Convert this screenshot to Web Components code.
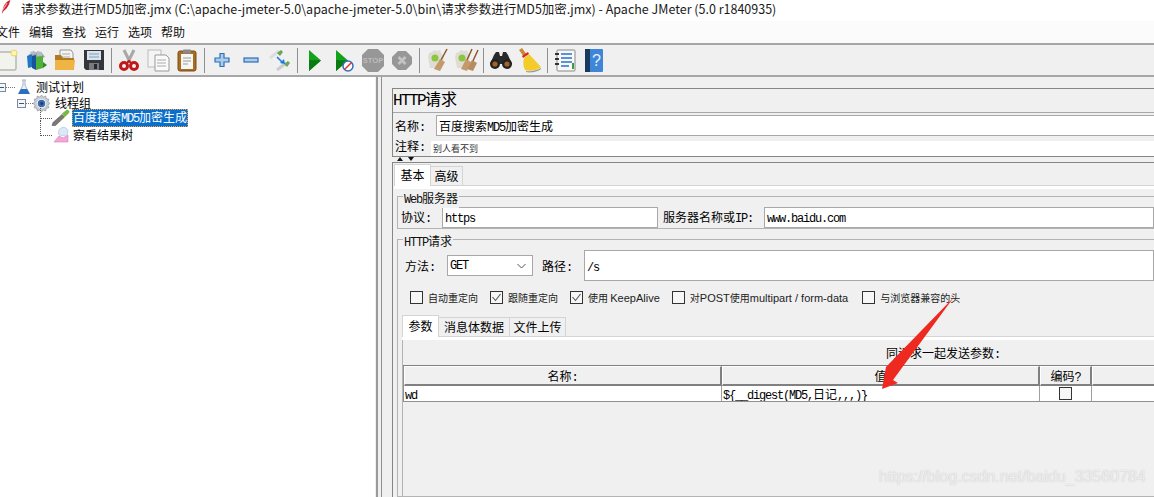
<!DOCTYPE html>
<html lang="zh-CN">
<head>
<meta charset="utf-8">
<title>Apache JMeter</title>
<style>
    html, body { margin: 0; padding: 0; background: #f0f0f0; }
    body { font: 12px "Noto Sans CJK SC", "Liberation Sans", sans-serif; color: #000; }
</style>
</head>
<body>
<jm-window></jm-window>
<script>
const ICONS = {
    newplan: `<rect x="-5" y="4" width="26" height="18" rx="1" fill="#f3f3ee" stroke="#9a9a94"/><circle cx="19" cy="5" r="3" fill="#fdf6b0" stroke="#e8d860"/><path d="M1 12h1M1 15h1" stroke="#aaa"/>`,
    templates: `<path d="M4 7l6-3 8 1 3 4-8 3z" fill="#9aa4aa"/><path d="M3 8l5-2v13l-4 1z" fill="#1f77c7"/><path d="M8 8l4-1v15l-4-2z" fill="#1553a0"/><path d="M12 9l7-1v12l-7 2z" fill="#4fb03a"/><path d="M19 14l4 3-4 3z" fill="#2c8a22"/><path d="M6 4l4-1 3 2-5 2zM13 3l5 1 0 4-5 0z" fill="#b5bcc0"/>`,
    open: `<path d="M7 2h11l2 3v9H7z" fill="#f4f4f2" stroke="#999"/><path d="M9 6h8M9 9h8" stroke="#aaa"/><path d="M2 7h6l2 3h11v11a1 1 0 0 1-1 1H3a1 1 0 0 1-1-1z" fill="#b07a1e"/><path d="M2 12h20l-1 9a1 1 0 0 1-1 1H3a1 1 0 0 1-1-1z" fill="#eeb544"/>`,
    save: `<path d="M2 2h20v20H4l-2-2z" fill="#33373c"/><rect x="5" y="3" width="14" height="9" fill="#d9e4ee"/><path d="M7 6h10M7 9h10" stroke="#7fa0c0"/><rect x="7" y="15" width="10" height="7" fill="#777b80"/><rect x="12" y="16" width="3" height="5" fill="#25282c"/>`,
    cut: `<path d="M7 2l6 12M17 2l-6 12" stroke="#a8a8a8" stroke-width="3"/><circle cx="7" cy="18" r="3.500" fill="none" stroke="#c01818" stroke-width="3"/><circle cx="17" cy="18" r="3.500" fill="none" stroke="#c01818" stroke-width="3"/><path d="M10 15l2-2 2 2" stroke="#c01818" stroke-width="2" fill="none"/>`,
    copy: `<rect x="2" y="2" width="13" height="17" fill="#f5f5f5" stroke="#bbb"/><path d="M9 7h11l3 3v13H9z" fill="#fafafa" stroke="#999"/><path d="M11 12h9M11 15h9M11 18h9" stroke="#aaa"/>`,
    paste: `<rect x="3" y="3" width="18" height="20" rx="2" fill="#a86d25" stroke="#7d4d12"/><rect x="6" y="6" width="12" height="15" fill="#f6f6f4"/><rect x="8" y="1.500" width="8" height="4" rx="1" fill="#888"/><path d="M8 10h8M8 13h8M8 16h5" stroke="#999"/>`,
    plus: `<path d="M10 5.500h4v4.500h5v4h-5v4.500h-4V14H5v-4h5z" fill="#a9cdea" stroke="#2f6fb5" stroke-width="1.200"/>`,
    minus: `<rect x="5" y="10" width="14" height="4" fill="#a9cdea" stroke="#2f6fb5" stroke-width="1.200"/>`,
    toggle: `<path d="M2 10l9-7" stroke="#ddd" stroke-width="3"/><path d="M9 5l4-3 2 2-3 4z" fill="#6ba657"/><path d="M9 22l9-7" stroke="#ccc" stroke-width="3"/><path d="M16 16l4-3 2 2-3 4z" fill="#6ba657"/><path d="M9 9l6 6" stroke="#1e78e6" stroke-width="1.600"/><path d="M12 15l5 1-1-5z" fill="#1e78e6"/>`,
    start: `<path d="M6 2l12 10.500L6 23z" fill="#13a31b"/><path d="M6 12l12 .5L6 23z" fill="#0a7a12"/>`,
    startnt: `<path d="M4 2l12 10.500L4 23z" fill="#13a31b"/><path d="M4 12l12 .5L4 23z" fill="#0a7a12"/><circle cx="16" cy="18" r="5" fill="#fff" stroke="#2f6fc0" stroke-width="1.500"/><path d="M12.500 21.500l7-7" stroke="#e03030" stroke-width="1.500"/>`,
    stop: `<path d="M7 1h10l6 6v11l-6 6H7l-6-6V7z" fill="#979797"/><text x="12" y="15" text-anchor="middle" font-family="Liberation Sans" font-weight="700" font-size="7.500" fill="#bdbdbd">STOP</text>`,
    shutdown: `<path d="M8 3h8l6 6v7l-6 6H8l-6-6V9z" fill="#979797"/><path d="M8.500 9l7 7M15.500 9l-7 7" stroke="#c4c4c4" stroke-width="2.600"/>`,
    clear: `<path d="M4 5l3-1 2-2 3 1 3-1 1 3 3 3-2 12H5L3 9z" fill="#dedcd4"/><circle cx="10" cy="10" r="3.500" fill="#8cc63f"/><path d="M22 1l-7 13" stroke="#8a5a2b" stroke-width="1.500"/><path d="M15 11l5 3-5 9-6-2z" fill="#c49a6c"/>`,
    clearall: `<path d="M2 5l3-1 2-2 3 1 3-1 1 3 2 3-2 12H3L1 9z" fill="#dedcd4"/><circle cx="8" cy="10" r="3.500" fill="#8cc63f"/><path d="M18 1l-6 13M24 2l-6 13" stroke="#8a5a2b" stroke-width="1.500"/><path d="M12 11l5 3-4 9-6-2z" fill="#c49a6c"/><path d="M18 12l5 3-4 8-6-2z" fill="#b78d60"/>`,
    search: `<path d="M5 7l2-3h3l1 4h2l1-4h3l2 3 4 9H1z" fill="#2a2a2a"/><circle cx="6" cy="16" r="5" fill="#222"/><circle cx="18" cy="16" r="5" fill="#222"/><circle cx="6" cy="16" r="2.600" fill="#a3622a"/><circle cx="18" cy="16" r="2.600" fill="#a3622a"/>`,
    broom: `<path d="M1 2l3-2 5 7-3 2z" fill="#c98a2e"/><path d="M4 8l6-4 1 2-6 4z" fill="#d8262c"/><path d="M6 10l5-4 12 13c-3 3-12 5-16 3C5 18 5 14 6 10z" fill="#f3cc2c"/><path d="M8 23c4 1 12-1 15-3v1c-3 3-11 4-15 3z" fill="#999"/>`,
    func: `<rect x="4" y="2" width="18" height="21" rx="1" fill="#f8f8f8" stroke="#888"/><path d="M2 6h4M2 11h4M2 16h4" stroke="#333" stroke-width="2"/><path d="M8 6h11M8 10h11M8 14h11M8 18h8" stroke="#2a6fd0" stroke-width="1.300"/><path d="M20 15v6" stroke="#3aa03a" stroke-width="2"/>`,
    help: `<rect x="3" y="1" width="18" height="23" rx="1" fill="#3f85d8"/><rect x="3" y="1" width="5" height="23" fill="#173a5e"/><text x="14.500" y="18" text-anchor="middle" font-family="Liberation Sans" font-size="16" fill="#e6f1fc">?</text>`
};

const TREE_ICONS = {
    flask: `<path d="M6 1h4M7 1v5L3 14h10L9 6V1" fill="#eef2f7" stroke="#a9b4c0"/><path d="M5 10h6l3 5H2z" fill="#2a6fc0"/>`,
    gear: `<path d="M8 0l1.500 2 2.500-1 .5 2.500 2.500.5-1 2.500 2 1.500-2 1.500 1 2.500-2.500.5-.5 2.500-2.500-1L8 16l-1.500-2-2.500 1-.5-2.500-2.500-.5 1-2.500L0 8l2-1.500L1 4l2.500-.5L4 1l2.500 1z" fill="#c9ced4" stroke="#8a9098" stroke-width=".6"/><circle cx="8" cy="8" r="4" fill="#3a6cb0" stroke="#eef" stroke-width="1"/><circle cx="8" cy="8" r="1.500" fill="#123a7a"/>`,
    pipette: `<path d="M-1 15.500l1-3 9-8 2.500 2.500-9 8.500z" fill="#7a7a72" stroke="#444" stroke-width=".5"/><path d="M9 3.500l5-4 2.500 1.500-.5 2-4.500 4.500z" fill="#7ab648"/>`,
    graph: `<path d="M1 15l5-6 4 2 5-3v7z" fill="#f4a8d8" stroke="#d97ab8" stroke-width=".6"/><path d="M6 8a5 5 0 0 1 9-5l-1 6z" fill="#dbe8f6" stroke="#a8c0dc" stroke-width=".6"/>`
};

// latin text in the old bitmap look, narrower than the cjk around it
class JmLatin extends HTMLElement {
    constructor() {
        super();
        this.attachShadow({ mode: 'open' });
        // no whitespace before the slot: this is inline and it would show as a gap
        this.shadowRoot.innerHTML = `<style>
                :host { display: inline; font-family: "Liberation Mono", monospace; letter-spacing: -1.2px; }
                :host([big]) { font-size: 16px; letter-spacing: -1.6px; }
                :host([sans]) { font-family: "Liberation Sans", sans-serif; font-size: 11px; letter-spacing: 0; }
            </style><slot></slot>`;
    }
}

class JmTitlebar extends HTMLElement {
    constructor() {
        super();
        this.attachShadow({ mode: 'open' });
        this.shadowRoot.innerHTML = `
            <style>
                :host { display: flex; align-items: center; height: 21px; background: #fff; font-size: 12.5px; white-space: nowrap; color: #1a1a1a; }
                svg { margin: -6px 9px 0 0; flex: none; }
                span { line-height: 16px; margin-top: -4px; }
            </style>
            <svg width="12" height="15" viewBox="0 0 10 14"><path d="M9 0C6 1 3 4 2 9l-1 4 2-3c3-2 5-5 6-10z" fill="#d3212d"/><path d="M2 9L6 3" stroke="#e8b0b0"/></svg>
            <span><slot></slot></span>`;
    }
}

class JmMenubar extends HTMLElement {
    constructor() {
        super();
        this.attachShadow({ mode: 'open' });
        const items = this.getAttribute('items').split(',');
        this.shadowRoot.innerHTML = `
            <style>
                :host { display: flex; gap: 9px; height: 22px; align-items: center; margin-left: -4px; padding-bottom: 1px; box-sizing: border-box; background: #fbfbfb; font-size: 12px; color: #111; white-space: nowrap; }
            </style>
            ${items.map(i => `<span>${i}</span>`).join('')}`;
    }
}

class JmToolbar extends HTMLElement {
    constructor() {
        super();
        this.attachShadow({ mode: 'open' });
        this.shadowRoot.innerHTML = `
            <style>
                :host { display: flex; align-items: center; box-sizing: border-box; height: 34px; flex: none; margin-left: -7.5px; border-top: 2px solid #a6a6a6; border-bottom: 2px solid #a6a6a6; background: #f0f0f0; width: 1170px; }
            </style>
            <slot></slot>`;
    }
}

class JmTool extends HTMLElement {
    constructor() {
        super();
        this.attachShadow({ mode: 'open' });
        const name = this.getAttribute('icon');
        this.shadowRoot.innerHTML = `
            <style>
                :host { display: flex; width: 29px; justify-content: center; flex: none; }
                svg { overflow: visible; display: block; }
            </style>
            <svg width="24" height="24" viewBox="0 0 24 24">${ICONS[name] || ''}</svg>`;
    }
}

class JmToolSep extends HTMLElement {
    constructor() {
        super();
        this.attachShadow({ mode: 'open' });
        this.shadowRoot.innerHTML = `
            <style>
                :host { display: block; width: 1px; height: 25px; margin: 0 2.5px; background: #8f8f8f; flex: none; }
            </style>`;
    }
}

class JmTree extends HTMLElement {
    constructor() {
        super();
        this.attachShadow({ mode: 'open' });
        this.shadowRoot.innerHTML = `
            <style>
                :host { display: block; width: 375px; flex: none; background: #fff; padding-top: 2px; box-sizing: border-box; }
            </style>
            <slot></slot>`;
    }
}

class JmTreeRow extends HTMLElement {
    constructor() {
        super();
        this.attachShadow({ mode: 'open' });
        const level = Number(this.getAttribute('level') || 0);
        const box = this.hasAttribute('open');
        const ind = [-3, 17, 49][level];
        const handle = [18, 16, 4][level];
        const after = [3, 4, 3][level];
        this.shadowRoot.innerHTML = `
            <style>
                :host { display: flex; align-items: center; height: 16px; position: relative; white-space: nowrap; font-size: 12px; }
                :host([selected]) { margin-top: -1px; margin-bottom: 1px; }
                .ind { width: ${Math.max(ind, 0)}px; margin-left: ${Math.min(ind, 0)}px; flex: none; }
                .handle { width: ${handle}px; height: 16px; flex: none; position: relative; margin-right: ${level === 0 ? 1 : 0}px; }
                .box { position: absolute; left: 0; top: 4px; width: 7px; height: 7px; border: 1px solid #7f8a96; background: #f4f6f8; }
                .box::after { content: ""; position: absolute; left: 1px; right: 1px; top: 3px; height: 1px; background: #2a5a90; }
                .dots { position: absolute; left: 9px; right: 0; top: 8px; border-top: 1px dotted #777; }
                .elbow { position: absolute; left: 40px; width: 11px; top: -7px; height: 15px; border-left: 1px dotted #555; border-bottom: 1px dotted #555; }
                svg { flex: none; margin-right: ${after}px; overflow: visible; }
                .txt { padding: 0 1px; line-height: 16px; }
                :host([selected]) .txt { background: #0a6fcb; color: #fff; outline: 1px dotted #f0a040; outline-offset: -1px; }
            </style>
            <div class="ind"></div>
            <div class="handle">${box ? '<div class="box"></div><div class="dots"></div>' : ''}</div>
            ${level === 2 ? '<div class="elbow"></div>' : ''}
            <svg width="${level === 1 ? 17 : 16}" height="${level === 1 ? 17 : 16}" viewBox="0 0 16 16">${TREE_ICONS[this.getAttribute('icon')]}</svg>
            <span class="txt"><slot></slot></span>`;
    }
}

class JmTextField extends HTMLElement {
    constructor() {
        super();
        this.attachShadow({ mode: 'open' });
        this.shadowRoot.innerHTML = `
            <style>
                :host { display: flex; align-items: center; box-sizing: border-box; background: #fff; border: 1px solid #a8a8a8; padding-left: 2px; font-size: 12px; white-space: nowrap; overflow: hidden; }
                :host([bare]) { border: 0; }
            </style>
            <span><slot></slot></span>`;
    }
}

class JmSelect extends HTMLElement {
    constructor() {
        super();
        this.attachShadow({ mode: 'open' });
        this.shadowRoot.innerHTML = `
            <style>
                :host { display: flex; align-items: center; justify-content: space-between; box-sizing: border-box; width: 86px; height: 21px; background: #fff; border: 1px solid #a8a8a8; padding: 0 6px 0 2px; flex: none; }
            </style>
            <slot></slot>
            <svg width="9" height="6" viewBox="0 0 9 6"><path d="M.5 1l4 4 4-4" fill="none" stroke="#555" stroke-width="1"/></svg>`;
    }
}

class JmCheck extends HTMLElement {
    constructor() {
        super();
        this.attachShadow({ mode: 'open' });
        this.shadowRoot.innerHTML = `
            <style>
                :host { display: inline-flex; align-items: center; gap: 5px; font-size: 10px; color: #222; white-space: nowrap; flex: none; }
                i { display: block; width: 11px; height: 11px; border: 1px solid #333; background: #f7f7f7; flex: none; position: relative; }
                svg { position: absolute; left: 1px; top: 1px; }
            </style>
            <i>${this.hasAttribute('checked') ? '<svg width="9" height="9" viewBox="0 0 9 9"><path d="M.5 4l3 3.500L8.500 1" fill="none" stroke="#555" stroke-width="1.100"/></svg>' : ''}</i>
            <span><slot></slot></span>`;
    }
}

class JmTabs extends HTMLElement {
    constructor() {
        super();
        this.attachShadow({ mode: 'open' });
        const list = this.getAttribute('tabs').split(',');
        const widths = this.getAttribute('widths').split(',');
        this.shadowRoot.innerHTML = `
            <style>
                :host { display: flex; flex-direction: column; box-sizing: border-box; min-width: 0; }
                .strip { display: flex; align-items: flex-end; height: 21px; flex: none; border-bottom: 1px solid #d4d4d4; }
                .tab { box-sizing: border-box; height: 19px; text-align: center; font-size: 12px; line-height: 18px; border: 1px solid #d4d4d4; border-bottom: 0; border-left: 0; flex: none; }
                .tab.on { height: 22px; background: #fff; border-left: 1px solid #d4d4d4; margin-bottom: -1px; line-height: 19px; position: relative; }
                .under { height: 3px; background: #fff; flex: none; }
                .body { flex: 1; min-height: 0; display: flex; flex-direction: column; }
            </style>
            <div class="strip">${list.map((t, i) => `<div class="tab${i === 0 ? ' on' : ''}" style="width:${widths[i]}px">${t}</div>`).join('')}</div>
            <div class="under"></div>
            <div class="body"><slot></slot></div>`;
    }
}

class JmGroup extends HTMLElement {
    constructor() {
        super();
        this.attachShadow({ mode: 'open' });
        this.shadowRoot.innerHTML = `
            <style>
                :host { display: block; box-sizing: border-box; border: 1px solid #b4b4b4; border-right: 0; position: relative; margin-right: -12px; }
                .legend { position: absolute; left: 5px; top: -7px; background: #f0f0f0; padding: 0 1px; font-size: 12px; line-height: 15px; white-space: nowrap; color: #111; }
            </style>
            <div class="legend"><slot name="legend"></slot></div>
            <slot></slot>`;
    }
}

class JmParamTable extends HTMLElement {
    constructor() {
        super();
        this.attachShadow({ mode: 'open' });
        this.shadowRoot.innerHTML = `
            <style>
                :host { display: grid; grid-template-columns: 318px 318px 52px 80px; grid-template-rows: 20px 15px; box-sizing: border-box; width: 772px; border-top: 1px solid #808080; border-bottom: 1px solid #909090; border-left: 1px solid #909090; font-size: 12px; background: #fff; }
                .h { box-sizing: border-box; background: #f0f0f0; border: 1px solid #fff; border-right: 2px solid #808080; border-bottom: 2px solid #808080; text-align: center; line-height: 18px; }
                .c { box-sizing: border-box; background: #fff; border-right: 1px solid #a0a0a0; line-height: 15px; white-space: nowrap; padding-left: 1px; overflow: hidden; }
                .mid { display: flex; align-items: center; justify-content: center; padding: 0; }
                i { display: block; width: 11px; height: 11px; border: 1px solid #333; background: #f7f7f7; }
            </style>
            <div class="h">名称<jm-latin>:</jm-latin></div><div class="h">值</div><div class="h">编码<jm-latin>?</jm-latin></div><div class="h"></div>
            <div class="c"><slot name="name"></slot></div><div class="c"><slot name="value"></slot></div><div class="c mid"><i></i></div><div class="c"></div>`;
    }
}

class JmSampler extends HTMLElement {
    constructor() {
        super();
        this.attachShadow({ mode: 'open' });
        this.shadowRoot.innerHTML = `
            <style>
                :host { display: flex; flex-direction: column; flex: 1; min-width: 0; box-sizing: border-box; padding: 11px 0 0 10px; background: #f0f0f0; border-left: 1px solid #8f8f8f; font-size: 12px; }
                .head { flex: none; border: 1px solid #868686; border-right: 0; height: 69px; margin-right: -12px; box-sizing: border-box; display: flex; flex-direction: column; }
                .title { height: 23px; font-size: 16px; line-height: 18px; white-space: nowrap; flex: none; }
                .namebox { flex: 1; border-top: 1px solid #a8a8a8; display: flex; flex-direction: column; }
                .row { display: flex; align-items: center; }
                .r1 { height: 27px; padding: 2px 0 4px 2px; box-sizing: border-box; gap: 11px; flex: none; }
                .r1 jm-text-field { flex: 1; height: 21px; }
                .r2 { height: 16px; padding-left: 2px; gap: 6px; align-items: flex-end; flex: none; }
                .r2 span.l { line-height: 16px; }
                .r2 jm-text-field { flex: 1; height: 15px; font-size: 9px; color: #333; }
                .split { height: 5px; flex: none; position: relative; }
                .split svg { position: absolute; left: 3px; top: 0; }
                .main { flex: 1; min-height: 0; border-top: 1px solid #868686; border-left: 1px solid #868686; padding: 1px 0 0 1px; display: flex; flex-direction: column; }
                jm-tabs.outer { flex: 1; min-height: 0; }
                .web { height: 33px; margin: 7px 0 0 3px; flex: none; }
                .web .row { height: 32px; padding: 8px 0 0 3px; box-sizing: border-box; }
                .http { margin: 10px 0 0 3px; flex: 1; min-height: 0; display: flex; flex-direction: column; }
                .method { padding: 10px 0 0 7px; height: 41px; box-sizing: border-box; flex: none; }
                .checks { gap: 12px; padding: 0 0 0 12px; height: 16px; margin-top: 8px; flex: none; }
                jm-tabs.inner { margin: 10px 0 0 4px; flex: 1; min-height: 0; }
                .inner-left { border-left: 1px solid #b4b4b4; height: 100%; display: flex; flex-direction: column; box-sizing: border-box; }
                .caption { height: 25px; padding-top: 5px; box-sizing: border-box; margin-left: 483px; line-height: 15px; white-space: nowrap; flex: none; }
            </style>
            <div class="head">
                <div class="title"><jm-latin big>HTTP</jm-latin>请求</div>
                <div class="namebox">
                    <div class="row r1"><span>名称<jm-latin>:</jm-latin></span><jm-text-field>百度搜索<jm-latin>MD5</jm-latin>加密生成</jm-text-field></div>
                    <div class="row r2"><span class="l">注释<jm-latin>:</jm-latin></span><jm-text-field bare>别人看不到</jm-text-field></div>
                </div>
            </div>
            <div class="split"><svg width="20" height="5" viewBox="0 0 20 5"><path d="M2 4l3-4 3 4z" fill="#111"/><path d="M13 0h6l-3 4z" fill="#111"/></svg></div>
            <div class="main">
                <jm-tabs class="outer" tabs="基本,高级" widths="37,32">
                    <jm-group class="web">
                        <span slot="legend"><jm-latin>Web</jm-latin>服务器</span>
                        <div class="row">
                            <span style="width:41px;flex:none">协议<jm-latin>:</jm-latin></span>
                            <jm-text-field style="width:216px;height:21px;flex:none"><jm-latin>https</jm-latin></jm-text-field>
                            <span style="margin:0 11px 0 5px;white-space:nowrap;flex:none">服务器名称或<jm-latin>IP:</jm-latin></span>
                            <jm-text-field style="flex:1;height:21px"><jm-latin>www.baidu.com</jm-latin></jm-text-field>
                        </div>
                    </jm-group>
                    <jm-group class="http">
                        <span slot="legend"><jm-latin>HTTP</jm-latin>请求</span>
                        <div class="row method">
                            <span style="width:42px;flex:none">方法<jm-latin>:</jm-latin></span>
                            <jm-select><jm-latin>GET</jm-latin></jm-select>
                            <span style="margin:0 12px 0 9px;flex:none;white-space:nowrap">路径<jm-latin>:</jm-latin></span>
                            <jm-text-field style="flex:1;height:31px"><jm-latin>/s</jm-latin></jm-text-field>
                        </div>
                        <div class="row checks">
                            <jm-check>自动重定向</jm-check>
                            <jm-check checked>跟随重定向</jm-check>
                            <jm-check checked>使用 <jm-latin sans>KeepAlive</jm-latin></jm-check>
                            <jm-check>对<jm-latin sans>POST</jm-latin>使用<jm-latin sans>multipart / form-data</jm-latin></jm-check>
                            <jm-check style="margin-left:2px">与浏览器兼容的头</jm-check>
                        </div>
                        <jm-tabs class="inner" tabs="参数,消息体数据,文件上传" widths="37,71,56">
                            <div class="inner-left">
                                <div class="caption">同请求一起发送参数<jm-latin>:</jm-latin></div>
                                <jm-param-table>
                                    <jm-latin slot="name">wd</jm-latin>
                                    <span slot="value"><jm-latin>\${__digest(MD5,</jm-latin>日记<jm-latin>,,,)}</jm-latin></span>
                                </jm-param-table>
                            </div>
                        </jm-tabs>
                    </jm-group>
                </jm-tabs>
            </div>`;
    }
}

class JmWindow extends HTMLElement {
    constructor() {
        super();
        this.attachShadow({ mode: 'open' });
        this.shadowRoot.innerHTML = `
            <style>
                :host { display: flex; flex-direction: column; width: 1154px; height: 497px; overflow: hidden; position: relative; background: #f0f0f0; }
                .body { flex: 1; min-height: 0; display: flex; }
                .sash { width: 5px; flex: none; box-sizing: border-box; border-left: 2px solid #9a9a9a; margin-left: 1px; }
                .arrow { position: absolute; left: 0; top: 0; pointer-events: none; }
                .mark { position: absolute; left: 879px; top: 468px; font: 16px "Liberation Sans", sans-serif; color: rgba(255,255,255,.75); text-shadow: 0 0 1px #b0b0b0; white-space: nowrap; }
            </style>
            <jm-titlebar>请求参数进行MD5加密.jmx (C:\\apache-jmeter-5.0\\apache-jmeter-5.0\\bin\\请求参数进行MD5加密.jmx) - Apache JMeter (5.0 r1840935)</jm-titlebar>
            <jm-menubar items="文件,编辑,查找,运行,选项,帮助"></jm-menubar>
            <jm-toolbar>
                <jm-tool icon="newplan"></jm-tool><jm-tool icon="templates"></jm-tool><jm-tool icon="open"></jm-tool><jm-tool icon="save"></jm-tool>
                <jm-tool-sep></jm-tool-sep>
                <jm-tool icon="cut"></jm-tool><jm-tool icon="copy"></jm-tool><jm-tool icon="paste"></jm-tool>
                <jm-tool-sep></jm-tool-sep>
                <jm-tool icon="plus"></jm-tool><jm-tool icon="minus"></jm-tool><jm-tool icon="toggle"></jm-tool>
                <jm-tool-sep></jm-tool-sep>
                <jm-tool icon="start"></jm-tool><jm-tool icon="startnt"></jm-tool><jm-tool icon="stop"></jm-tool><jm-tool icon="shutdown"></jm-tool>
                <jm-tool-sep></jm-tool-sep>
                <jm-tool icon="clear"></jm-tool><jm-tool icon="clearall"></jm-tool>
                <jm-tool-sep></jm-tool-sep>
                <jm-tool icon="search"></jm-tool><jm-tool icon="broom"></jm-tool>
                <jm-tool-sep></jm-tool-sep>
                <jm-tool icon="func"></jm-tool><jm-tool icon="help"></jm-tool>
            </jm-toolbar>
            <div class="body">
                <jm-tree>
                    <jm-tree-row level="0" icon="flask" open>测试计划</jm-tree-row>
                    <jm-tree-row level="1" icon="gear" open>线程组</jm-tree-row>
                    <jm-tree-row level="2" icon="pipette" selected>百度搜索<jm-latin>MD5</jm-latin>加密生成</jm-tree-row>
                    <jm-tree-row level="2" icon="graph">察看结果树</jm-tree-row>
                </jm-tree>
                <div class="sash"></div>
                <jm-sampler></jm-sampler>
            </div>
            <svg class="arrow" width="1154" height="497"><path d="M954 297L886 367 882 389 898 383 893 380z" fill="#ee2a20"/></svg>
            <div class="mark">https://blog.csdn.net/baidu_33560784</div>`;
    }
}

// jm-latin has to exist first, the table and the sampler use it in their own markup
window.customElements.define('jm-latin', JmLatin);
window.customElements.define('jm-titlebar', JmTitlebar);
window.customElements.define('jm-menubar', JmMenubar);
window.customElements.define('jm-toolbar', JmToolbar);
window.customElements.define('jm-tool', JmTool);
window.customElements.define('jm-tool-sep', JmToolSep);
window.customElements.define('jm-tree', JmTree);
window.customElements.define('jm-tree-row', JmTreeRow);
window.customElements.define('jm-text-field', JmTextField);
window.customElements.define('jm-select', JmSelect);
window.customElements.define('jm-check', JmCheck);
window.customElements.define('jm-tabs', JmTabs);
window.customElements.define('jm-group', JmGroup);
window.customElements.define('jm-param-table', JmParamTable);
window.customElements.define('jm-sampler', JmSampler);
window.customElements.define('jm-window', JmWindow);
</script>
</body>
</html>
